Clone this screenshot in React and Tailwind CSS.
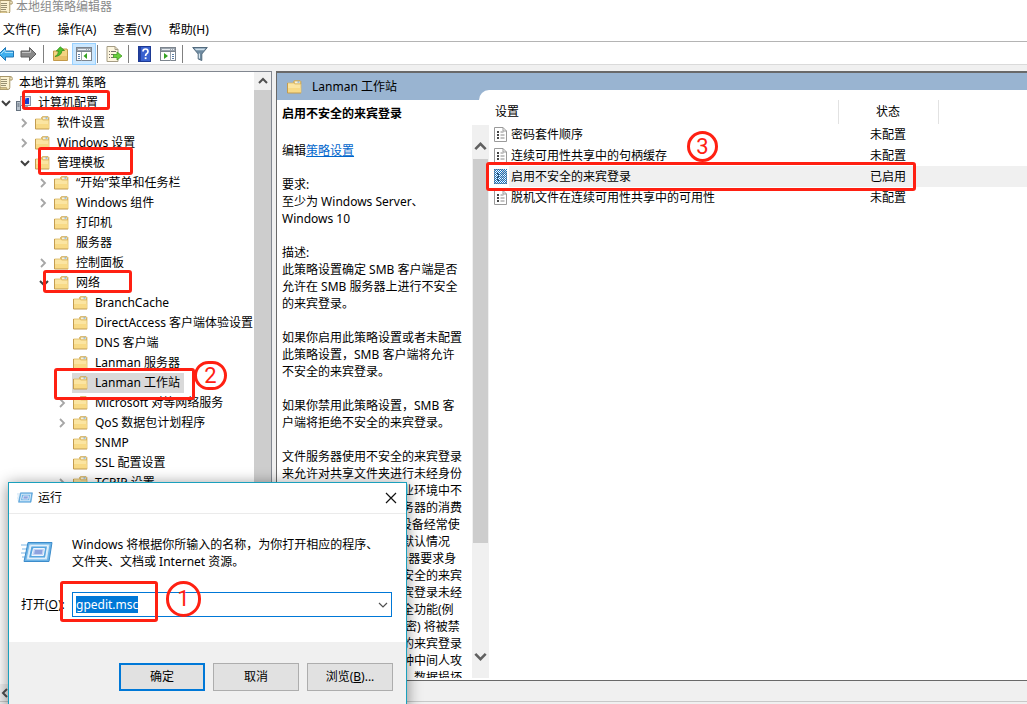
import { useEffect, useRef } from "react";

function FolderIcon() {
  return (
    <svg width="15" height="14" viewBox="0 0 15 14" className="block shrink-0">
      <path d="M6.500 3V1.500L7.500.5H13l1 1V4H6.500z" fill="#e2bf6c" stroke="#c9a24f" strokeWidth=".6" />
      <rect x="8" y="1.500" width="5" height="2" fill="#f6f1de" />
      <rect x="10.500" y="1.500" width="2" height="1" fill="#5b9bd5" />
      <path d="M.5 3h6l1.500 1h6v9h-13.500z" fill="#fbe5a2" />
      <path d="M.5 3h6l1.500 1h6v9" fill="none" stroke="#dcb966" strokeWidth=".8" />
      <path d="M1 8h12.500v5H1z" fill="#f8da86" />
      <path d="M.5 3v10h13.500" fill="none" stroke="#c39c50" />
    </svg>
  );
}

function ScrollIcon() {
  return (
    <svg width="13" height="16" viewBox="0 0 13 16" className="block shrink-0">
      <path d="M0 1.500h10.500q2 .2 1.800 2.200L12 5h-2.200v7.500q0 2-2 2H0z" fill="#fbf1cf" stroke="#a89668" />
      <path d="M0 12.500h6.500q0 2 1.500 2H0z" fill="#d9c58c" stroke="#a89668" strokeWidth=".7" />
      <path d="M1 4.500h6M1 6.500h6M1 8.500h6M1 10.500h5" stroke="#8c8468" strokeWidth=".9" />
      <path d="M9.800 5V3q.2-1.400 1.200-1.400" fill="none" stroke="#a89668" />
    </svg>
  );
}

function ComputerIcon() {
  return (
    <svg width="15" height="16" viewBox="0 0 15 16" className="block shrink-0">
      <rect x=".5" y="6.500" width="4" height="9" fill="#b9c2cc" stroke="#66727f" />
      <path d="M1.500 9h2M1.500 11h2" stroke="#55616e" />
      <rect x="4.500" y="1.500" width="10" height="9" fill="#dfe5ee" stroke="#8793a5" />
      <rect x="6" y="3" width="7" height="6" fill="#1540cf" />
      <path d="M6 3h5L6 8z" fill="#6f94f2" />
      <path d="M7 11h5v3H6z" fill="#9aa6b5" />
    </svg>
  );
}

function Chevron({ direction, className = "", size = 10, stroke = 2 }) {
  const paths = {
    right: "M2 1l4 4-4 4",
    left: "M7 1L3 5l4 4",
    down: "M1 3l4 4 4-4",
    up: "M1 7l4-4 4 4",
  };
  return (
    <svg width={size} height={size} viewBox="0 0 10 10" className={`block shrink-0 ${className}`}>
      <path d={paths[direction]} fill="none" stroke="currentColor" strokeWidth={stroke} />
    </svg>
  );
}

function PolicyIcon({ active }) {
  return (
    <svg width="13" height="15" viewBox="0 0 13 15" className="block">
      <defs>
        <pattern id="dither" width="2" height="2" patternUnits="userSpaceOnUse">
          <rect width="1" height="1" fill="#1272c4" />
          <rect x="1" y="1" width="1" height="1" fill="#1272c4" />
        </pattern>
      </defs>
      <path d="M.5.5H9l3.500 3.500v10.500H.5z" fill="#fff" stroke="#9a9a9a" />
      <path d="M9 .5V4h3.500" fill="none" stroke="#9a9a9a" />
      <path d="M3 4h2v2H3zM3 7h2v2H3zM3 10h2v2H3z" fill="#444" />
      <path d="M6.500 5h3M6.500 8h4M6.500 11h4" stroke="#888" />
      {active && <rect width="13" height="15" fill="url(#dither)" />}
    </svg>
  );
}

function RunIcon({ className }) {
  return (
    <svg viewBox="0 0 32 24" className={`block shrink-0 ${className}`}>
      <path d="M0 4h8M1 8h6M0 12h6M1 16h5" stroke="#a9d0ee" strokeWidth="1.300" />
      <path d="M7 1.500h24l-3 19H3z" fill="#6bb3e6" stroke="#3c8ccb" />
      <path d="M8.500 3.500h20l-2.500 15H5.500z" fill="#cfe7f8" />
      <path d="M10 5h16.500l-2 12H7.500z" fill="#58a6e0" stroke="#fff" strokeWidth=".8" />
      <path d="M12.500 7.500h11l-1.200 7H10.800z" fill="#c3d2f4" stroke="#eef6fd" />
      <path d="M14 9h7.500l-.7 4h-7.600z" fill="#8ea3de" />
    </svg>
  );
}

function BackIcon() {
  return (
    <svg width="14" height="16" viewBox="0 0 14 16" className="block">
      <path d="M-1 8 5.500 1.500V5H13.500v6H5.500v3.500z" fill="#41b0ee" stroke="#2277b5" />
      <path d="M1 8 5 4v2.500h8" fill="none" stroke="#a9e0fb" />
    </svg>
  );
}

function ForwardIcon() {
  return (
    <svg width="17" height="16" viewBox="0 0 17 16" className="block">
      <path d="M16 8 9.500 1.500V5H1v6h8.500v3.500z" fill="#8a8a8a" stroke="#5e5e5e" />
      <path d="M2 6.500h8.500V4" fill="none" stroke="#c4c4c4" />
    </svg>
  );
}

function UpFolderIcon() {
  return (
    <svg width="15" height="16" viewBox="0 0 15 16" className="block">
      <path d="M.5 5h7l1-2h5.500l.5 1v10.500H.5z" fill="#f4d482" stroke="#c39a4a" />
      <path d="M1 10h13v4H1z" fill="#e8c069" />
      <path d="M2 10.500q3.500-1.500 3.500-5.500H3.300L7.300.8l4.200 3.700H9q-.5 5.500-7 6z" fill="#4fc02c" stroke="#2d8a18" strokeWidth=".7" />
    </svg>
  );
}

function PaneIcon({ side }) {
  return (
    <svg width="16" height="14" viewBox="0 0 16 14" className="block">
      <rect x=".5" y=".5" width="15" height="13" fill="#fff" stroke="#7d858e" />
      <path d="M1 1h14v3H1z" fill="#9ba4ae" />
      <path d="M2 2.500h8M11 2.500h1M13 2.500h1" stroke="#e9edf1" />
      <path d="M1 4.500h14" stroke="#7d858e" />
      {side === "left" ? (
        <>
          <path d="M5.500 5v9" stroke="#9aa3ad" />
          <path d="M2 7.500h2M2 9.500h2M2 11.500h2" stroke="#5b7fa8" />
          <path d="M11 6v6L7.500 9z" fill="#35a321" />
        </>
      ) : (
        <>
          <path d="M10.500 5v9" stroke="#9aa3ad" />
          <path d="M12 7.500h2M12 9.500h2M12 11.500h2" stroke="#5b7fa8" />
          <path d="M4 6v6l4-3z" fill="#35a321" />
        </>
      )}
    </svg>
  );
}

function ExportIcon() {
  return (
    <svg width="17" height="16" viewBox="0 0 17 16" className="block">
      <path d="M1 .5h8l3 3v12H1z" fill="#fdf6df" stroke="#a59c84" />
      <path d="M9 .5v3h3" fill="none" stroke="#a59c84" />
      <path d="M3 5.500h1M5 5.500h5M3 8.500h1M5 8.500h3M3 11.500h1M5 11.500h3" stroke="#77716a" />
      <path d="M7.500 8.500H11V6l5 4-5 4v-2.500H7.500z" fill="#6ccf3c" stroke="#3e9a22" strokeWidth=".8" />
    </svg>
  );
}

function HelpIcon() {
  return (
    <svg width="13" height="16" viewBox="0 0 13 16" className="block">
      <rect x=".5" y=".5" width="12" height="15" fill="#3a62cf" stroke="#1d3a94" />
      <path d="M1 1h2v14H1z" fill="#233f9e" />
      <path d="M5 5.500Q5 3 7.500 3T10 5.500Q10 7 8.500 7.800 7.600 8.400 7.600 10" fill="none" stroke="#fff" strokeWidth="1.700" />
      <rect x="6.700" y="11.300" width="1.800" height="1.800" fill="#fff" />
    </svg>
  );
}

function FilterIcon() {
  return (
    <svg width="16" height="16" viewBox="0 0 16 16" className="block">
      <path d="M.7 1.500h14.600L9.800 8v6.500l-3.600-1.500V8z" fill="#6f8ba1" stroke="#536b7e" />
      <path d="M2.500 2.500h11L12 4.200H4z" fill="#cfe0ec" />
      <path d="M7.400 7.500v5" stroke="#dbe8f1" strokeWidth="1.200" />
    </svg>
  );
}

const indents = ["pl-0", "pl-0", "pl-[19px]", "pl-[38px]", "pl-[57px]"];

const tree = [
  { level: 1, label: "计算机配置", state: "open", icon: "computer" },
  { level: 2, label: "软件设置", state: "closed" },
  { level: 2, label: "Windows 设置", state: "closed" },
  { level: 2, label: "管理模板", state: "open" },
  { level: 3, label: "“开始”菜单和任务栏", state: "closed" },
  { level: 3, label: "Windows 组件", state: "closed" },
  { level: 3, label: "打印机" },
  { level: 3, label: "服务器" },
  { level: 3, label: "控制面板", state: "closed" },
  { level: 3, label: "网络", state: "open" },
  { level: 4, label: "BranchCache" },
  { level: 4, label: "DirectAccess 客户端体验设置" },
  { level: 4, label: "DNS 客户端" },
  { level: 4, label: "Lanman 服务器" },
  { level: 4, label: "Lanman 工作站", selected: true },
  { level: 4, label: "Microsoft 对等网络服务", state: "closed" },
  { level: 4, label: "QoS 数据包计划程序", state: "closed" },
  { level: 4, label: "SNMP" },
  { level: 4, label: "SSL 配置设置" },
  { level: 4, label: "TCPIP 设置", state: "closed" },
];

const policies = [
  { name: "密码套件顺序", status: "未配置" },
  { name: "连续可用性共享中的句柄缓存", status: "未配置" },
  { name: "启用不安全的来宾登录", status: "已启用", active: true },
  { name: "脱机文件在连续可用性共享中的可用性", status: "未配置" },
];

const description = [
  ["要求:", "至少为 Windows Server、", "Windows 10"],
  ["描述:", "此策略设置确定 SMB 客户端是否", "允许在 SMB 服务器上进行不安全", "的来宾登录。"],
  ["如果你启用此策略设置或者未配置", "此策略设置，SMB 客户端将允许", "不安全的来宾登录。"],
  ["如果你禁用此策略设置，SMB 客", "户端将拒绝不安全的来宾登录。"],
  [
    "文件服务器使用不安全的来宾登录",
    "来允许对共享文件夹进行未经身份",
    "验证的访问。虽然在企业环境中不",
    "常见，但在用作文件服务器的消费",
    "者网络附加存储 (NAS)设备经常使",
    "用不安全的来宾登录。默认情况",
    "下，Windows 文件服务器要求身",
    "份验证，并且不使用不安全的来宾",
    "登录。由于不安全的来宾登录未经",
    "身份验证，故重要的安全功能(例",
    "如 SMB 签名和 SMB 加密) 将被禁",
    "用。因此，允许不安全的来宾登录",
    "的客户端将容易受到各种中间人攻",
    "击，将会导致数据丢失、数据损坏",
  ],
];

function TreeRow({ item }) {
  return (
    <li className={`flex h-5 items-center ${indents[item.level]}`}>
      <span className="flex w-3 shrink-0 justify-center">
        {item.state === "open" && <Chevron direction="down" className="text-[#404040]" />}
        {item.state === "closed" && <Chevron direction="right" stroke={1.8} className="text-[#a6a6a6]" />}
      </span>
      <button
        type="button"
        className={`ml-[3px] flex h-5 items-center gap-[7px] pr-1 pl-px whitespace-nowrap ${item.selected ? "bg-[#d9d9d9]" : ""}`}
      >
        {item.icon === "computer" ? <ComputerIcon /> : <FolderIcon />}
        {item.label}
      </button>
    </li>
  );
}

function ToolSeparator({ className }) {
  return <span className={`h-[18px] w-px bg-[#808080] ${className}`} />;
}

function TreePane() {
  return (
    <nav aria-label="策略树" className="flex w-[272px] shrink-0 flex-col border-t border-r border-[#828790] bg-white">
      <div className="flex min-h-0 flex-1">
        <div className="min-w-0 flex-1 overflow-hidden pt-px">
          <div className="flex h-5 items-center gap-1.5">
            <ScrollIcon />
            本地计算机 策略
          </div>
          <ul>
            {tree.map((item) => (
              <TreeRow key={item.label} item={item} />
            ))}
          </ul>
        </div>
        <div className="flex w-[17px] flex-col bg-[#f0f0f0]">
          <div className="flex h-[18px] items-center justify-center text-[#505050]">
            <Chevron direction="up" />
          </div>
          <div className="h-[480px] bg-[#cdcdcd]" />
        </div>
      </div>
      <div className="flex h-[17px] items-center bg-[#f0f0f0] text-[#505050]">
        <Chevron direction="left" />
      </div>
    </nav>
  );
}

function DetailsPane() {
  return (
    <section className="mb-5 ml-1 flex min-w-0 flex-1 border-t-2 border-b border-l border-[#696969] bg-[#99b4d1]">
      <div className="flex w-[202px] shrink-0 flex-col">
        <h1 className="flex h-[27px] shrink-0 items-center gap-2.5 pl-2.5">
          <FolderIcon />
          Lanman 工作站
        </h1>
        <div className="relative z-10 flex min-h-0 w-[212px] flex-1 flex-col bg-white pb-0.5">
          <h2 className="h-[25px] shrink-0 pl-[5px] leading-[27px] font-bold">启用不安全的来宾登录</h2>
          <div className="flex min-h-0 flex-1">
            <div className="min-w-0 flex-1 overflow-hidden pt-[17px] pl-[5px] leading-[17px] whitespace-nowrap">
              <p className="mb-[17px]">
                编辑
                <a href="#policy" className="text-[#0066cc] underline">
                  策略设置
                </a>
              </p>
              {description.map((lines) => (
                <p key={lines[0]} className="mb-[17px]">
                  {lines.map((line) => (
                    <span key={line} className="block">
                      {line}
                    </span>
                  ))}
                </p>
              ))}
            </div>
            <div className="flex w-[17px] shrink-0 flex-col bg-[#f0f0f0]">
              <div className="flex h-[34px] items-center justify-center pt-2 text-[#606060]">
                <Chevron direction="up" size={13} />
              </div>
              <div className="mx-px h-[384px] bg-[#cdcdcd]" />
              <div className="mt-auto flex h-[43px] items-center justify-center text-[#606060]">
                <Chevron direction="down" size={13} />
              </div>
            </div>
          </div>
        </div>
      </div>
      <div className="mt-[17px] min-w-0 flex-1 overflow-hidden rounded-tl-[10px] bg-white pt-2.5 pl-2.5">
        <table className="w-full table-fixed border-collapse">
          <colgroup>
            <col className="w-5" />
            <col className="w-[329px]" />
            <col className="w-[100px]" />
            <col />
          </colgroup>
          <thead>
            <tr className="h-6">
              <th colSpan={2} scope="col" className="border-r border-[#e2e2e2] p-0 pl-1.5 text-left font-normal">
                设置
              </th>
              <th scope="col" className="border-r border-[#e2e2e2] p-0 font-normal">
                状态
              </th>
              <td />
            </tr>
          </thead>
          <tbody>
            {policies.map((policy) => (
              <tr key={policy.name} className="h-[21px]">
                <td className="p-0 pl-[5px]">
                  <PolicyIcon active={policy.active} />
                </td>
                <td className={`p-0 pl-0.5 ${policy.active ? "bg-[#f0f0f0]" : ""}`}>{policy.name}</td>
                <td className={`p-0 text-center ${policy.active ? "bg-[#f0f0f0]" : ""}`}>{policy.status}</td>
                <td className={policy.active ? "bg-[#f0f0f0]" : ""} />
              </tr>
            ))}
          </tbody>
        </table>
      </div>
    </section>
  );
}

function RunDialog() {
  const inputRef = useRef(null);
  useEffect(() => {
    inputRef.current.focus();
    inputRef.current.select();
  }, []);

  return (
    <div
      role="dialog"
      aria-labelledby="run-title"
      className="absolute top-[482px] left-2 z-20 w-[399px] border border-[#1aa0bd] bg-white shadow-[0_2px_14px_rgba(0,0,0,0.45)]"
    >
      <div className="flex h-[31px] items-center gap-[5px] border-b border-[#ebebeb] pr-[7px] pl-2">
        <RunIcon className="h-3 w-4" />
        <span id="run-title" className="flex-1">
          运行
        </span>
        <button type="button" aria-label="关闭" className="flex size-4 items-center justify-center">
          <svg width="12" height="12" viewBox="0 0 12 12" stroke="#111" strokeWidth="1.200">
            <path d="M1 1l10 10M11 1L1 11" />
          </svg>
        </button>
      </div>
      <div className="h-32 px-3 pt-[22px]">
        <div className="flex items-center gap-[19px]">
          <RunIcon className="h-6 w-8" />
          <p className="leading-[17px] whitespace-nowrap">
            Windows 将根据你所输入的名称，为你打开相应的程序、
            <br />
            文件夹、文档或 Internet 资源。
          </p>
        </div>
        <div className="mt-[22px] flex items-center">
          <label htmlFor="run-command" className="w-[51px] shrink-0 whitespace-nowrap">
            打开(<u>O</u>):
          </label>
          <div className="flex h-[25px] w-80 items-center border border-[#0078d7] bg-white pr-[3px] pl-[3px]">
            <input
              id="run-command"
              ref={inputRef}
              type="text"
              defaultValue="gpedit.msc"
              className="h-[17px] min-w-0 flex-1 leading-[17px] outline-none selection:bg-[#0078d7] selection:text-white"
            />
            <button type="button" aria-label="显示历史记录" className="text-[#505050]">
              <Chevron direction="down" stroke={1.2} />
            </button>
          </div>
        </div>
      </div>
      <div className="flex gap-2 bg-[#f0f0f0] pt-[21px] pb-5 pl-[110px]">
        <button type="button" className="h-7 w-[86px] border-2 border-[#0078d7] bg-[#e1e1e1]">
          确定
        </button>
        <button type="button" className="h-7 w-[86px] border border-[#adadad] bg-[#e1e1e1]">
          取消
        </button>
        <button type="button" className="h-7 w-[86px] border border-[#adadad] bg-[#e1e1e1]">
          浏览(<u>B</u>)...
        </button>
      </div>
    </div>
  );
}

const highlights = [
  "top-[90px] left-[22px] h-5 w-[88px]",
  "top-[147px] left-[38px] h-7 w-[95px]",
  "top-[270px] left-[43px] h-[23px] w-[89px]",
  "top-[368px] left-[54px] h-8 w-[141px]",
  "top-[581px] left-[60px] h-[41px] w-[98px]",
  "top-[162px] left-[486px] h-[29px] w-[430px]",
];

const steps = [
  { number: "1", place: "top-[581px] left-[166px] h-9 w-[35px]" },
  { number: "2", place: "top-[361px] left-[194px] h-[29px] w-[33px]" },
  { number: "3", place: "top-[131px] left-[687px] h-[31px] w-[31px]" },
];

function Annotations() {
  return (
    <>
      {highlights.map((place) => (
        <div key={place} className={`pointer-events-none absolute z-30 rounded-[3px] border-[3px] border-[#ff2012] ${place}`} />
      ))}
      {steps.map((step) => (
        <div
          key={step.number}
          className={`pointer-events-none absolute z-30 flex items-center justify-center rounded-full border-[3px] border-[#ff2012] font-[Roboto,sans-serif] text-[22px] leading-none text-[#ff2012] ${step.place}`}
        >
          {step.number}
        </div>
      ))}
    </>
  );
}

export default function App() {
  return (
    <div className="relative flex h-screen flex-col overflow-hidden bg-[#f0f0f0] font-['Noto_Sans','Noto_Sans_CJK_SC',sans-serif] text-[12px] leading-4 text-black">
      <header className="flex h-[13px] shrink-0 items-center gap-[3px] bg-white text-[#8a8a8a]">
        <ScrollIcon />
        本地组策略编辑器
      </header>
      <div role="menubar" className="flex h-[29px] shrink-0 items-center gap-[17px] border-b border-[#b4b4b4] bg-white pt-1.5 pl-[3px]">
        <button type="button">文件(F)</button>
        <button type="button">操作(A)</button>
        <button type="button">查看(V)</button>
        <button type="button">帮助(H)</button>
      </div>
      <div role="toolbar" className="flex h-[23px] shrink-0 items-center border-b border-[#dadada] bg-white pt-px">
        <button type="button" aria-label="后退">
          <BackIcon />
        </button>
        <button type="button" aria-label="前进" className="ml-1.5">
          <ForwardIcon />
        </button>
        <ToolSeparator className="ml-1.5" />
        <button type="button" aria-label="上一级" className="ml-[9px]">
          <UpFolderIcon />
        </button>
        <button
          type="button"
          aria-label="显示控制台树"
          className="ml-1 flex h-[22px] w-6 items-center justify-center border border-[#99d1ff] bg-[#cce8ff]"
        >
          <PaneIcon side="left" />
        </button>
        <ToolSeparator className="ml-px" />
        <button type="button" aria-label="导出列表" className="ml-2">
          <ExportIcon />
        </button>
        <ToolSeparator className="ml-[5px]" />
        <button type="button" aria-label="帮助" className="ml-[9px]">
          <HelpIcon />
        </button>
        <button type="button" aria-label="显示操作窗格" className="ml-[9px]">
          <PaneIcon side="right" />
        </button>
        <ToolSeparator className="ml-1.5" />
        <button type="button" aria-label="筛选器" className="ml-[9px]">
          <FilterIcon />
        </button>
      </div>
      <main className="flex min-h-0 flex-1 pt-1.5">
        <TreePane />
        <DetailsPane />
      </main>
      <footer className="h-[3px] shrink-0 border-t border-[#c8c8c8] bg-[#f0f0f0]" />
      <RunDialog />
      <Annotations />
    </div>
  );
}
